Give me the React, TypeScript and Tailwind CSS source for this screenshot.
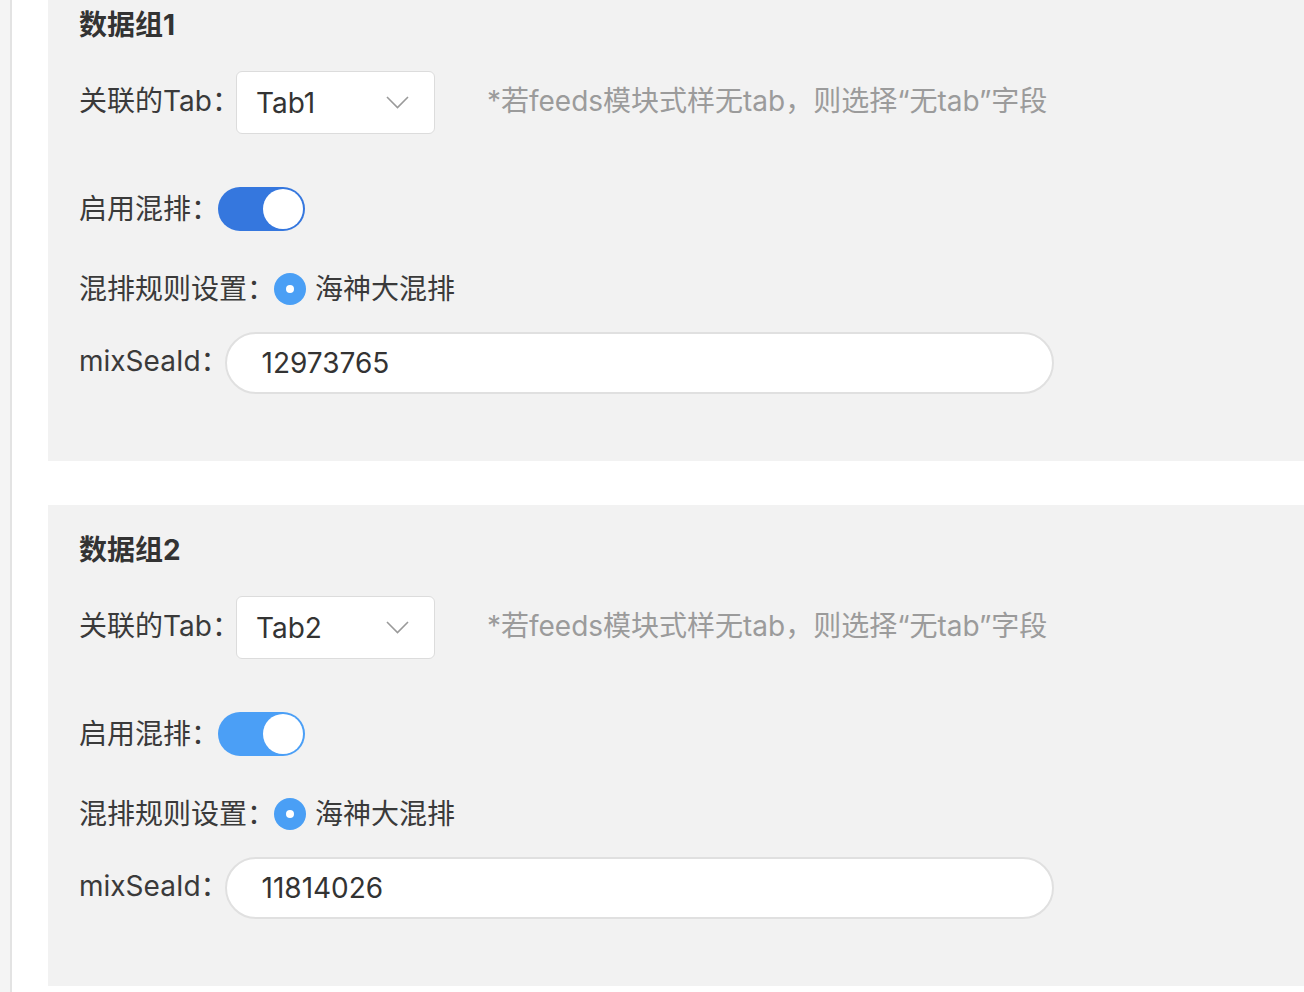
import React from "react";

type Group = {
  title: string;
  tab: string;
  seaId: string;
  toggleColor: string;
};

const groups: Group[] = [
  { title: "数据组1", tab: "Tab1", seaId: "12973765", toggleColor: "bg-[#3577de]" },
  { title: "数据组2", tab: "Tab2", seaId: "11814026", toggleColor: "bg-[#4b9ff6]" },
];

const Chevron = () => (
  <svg width="23" height="13" viewBox="0 0 23 13" fill="none">
    <path d="M1 1l10.5 10.5L22 1" stroke="#9a9a9a" strokeWidth="1.6" />
  </svg>
);

const DataGroup: React.FC<{ group: Group; className?: string }> = ({ group, className }) => {
  return (
    <div className={"bg-[#f2f2f2] pl-[31px] pt-[27px] pb-[67px] " + (className ?? "")}>
      <p className="text-[28px] leading-[36px] font-bold text-[#333]">{group.title}</p>

      <div className="mt-[28px] flex items-center h-[63px]">
        <span className="-mt-[3px]">关联的Tab：</span>
        <div className="-ml-[4px] w-[199px] h-[63px] bg-white border border-[#dcdcdc] rounded-[6px] flex items-center justify-between pl-[19px] pr-[25px]">
          <span className="text-[#333]">{group.tab}</span>
          <Chevron />
        </div>
        <span className="ml-[52px] -mt-[3px] text-[#9b9b9b]">*若feeds模块式样无tab，则选择“无tab”字段</span>
      </div>

      <div className="mt-[53px] flex items-center h-[44px]">
        <span>启用混排：</span>
        <div className={"-ml-[1px] w-[87px] h-[44px] rounded-full p-[2px] flex justify-end " + group.toggleColor}>
          <div className="w-[40px] h-[40px] rounded-full bg-white" />
        </div>
      </div>

      <div className="mt-[40px] flex items-center h-[36px]">
        <span>混排规则设置：</span>
        <div className="-ml-[1px] w-[32px] h-[32px] rounded-full bg-[#4a9ff5] flex items-center justify-center">
          <div className="w-[8px] h-[8px] rounded-full bg-white" />
        </div>
        <span className="ml-[9px]">海神大混排</span>
      </div>

      <div className="mt-[25px] flex items-center h-[62px]">
        <span className="-mt-[4px]">mixSeaId：</span>
        <div className="-ml-[4px] w-[829px] h-[62px] bg-white border-2 border-[#e0e0e0] rounded-full flex items-center pl-[35px]">
          <span className="text-[#333]">{group.seaId}</span>
        </div>
      </div>
    </div>
  );
};

export default function App() {
  return (
    <div
      className="flex h-[992px] overflow-hidden bg-white text-[28px] text-[#3a3a3a]"
      style={{ fontFamily: "Inter, 'Noto Sans CJK SC', sans-serif" }}
    >
      <div className="w-[12px] shrink-0 bg-[#f4f4f4] border-r-2 border-[#e3e3e3]" />
      <div className="ml-[36px] flex-1 -mt-[20px]">
        <DataGroup group={groups[0]} />
        <DataGroup group={groups[1]} className="mt-[44px]" />
      </div>
    </div>
  );
}
